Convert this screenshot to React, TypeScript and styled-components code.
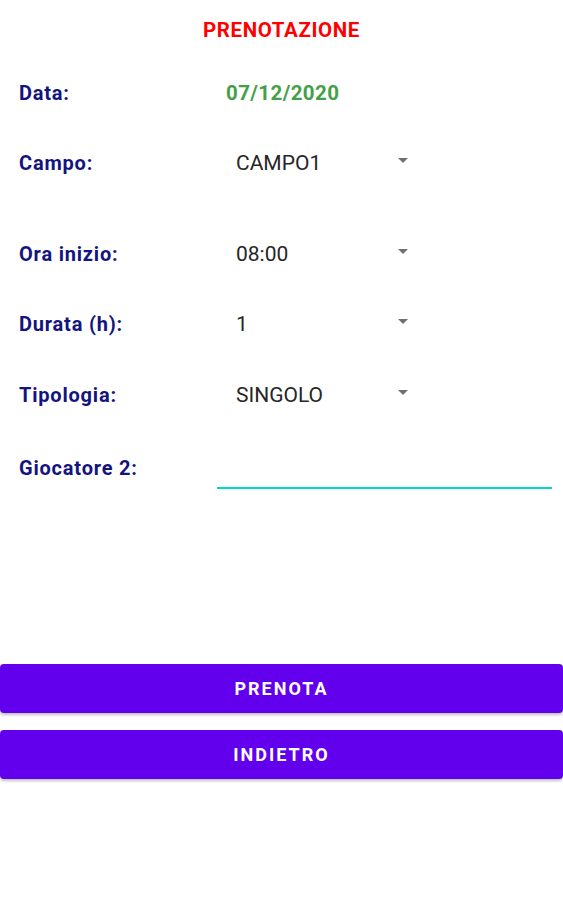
import React from 'react'
import styled, { createGlobalStyle } from 'styled-components'

const GlobalStyle = createGlobalStyle`
  html, body {
    margin: 0;
    padding: 0;
    background: #fff;
  }
  body {
    font-family: Roboto, 'Liberation Sans', sans-serif;
  }
`

const Screen = styled.div`
  width: 563px;
  height: 900px;
  display: flex;
  flex-direction: column;
  background: #fff;
`
const Header = styled.div`
  height: 60px;
  display: flex;
  align-items: center;
  justify-content: center;
  color: #ff0000;
  font-size: 20.5px;
  font-weight: 700;
  letter-spacing: 0.6px;
`
const Row = styled.div<{ $top: number }>`
  margin-top: ${(p) => p.$top}px;
  height: 40px;
  display: flex;
  align-items: center;
`
const Label = styled.div`
  width: 198px;
  padding-left: 19px;
  color: #14147f;
  font-size: 20px;
  font-weight: 700;
  letter-spacing: 0.8px;
`
const DateValue = styled.div`
  padding-left: 9px;
  color: #43a047;
  font-size: 20.5px;
  font-weight: 700;
  letter-spacing: 0.4px;
`
const Spinner = styled.div`
  width: 172px;
  padding: 0 10px 0 19px;
  display: flex;
  align-items: center;
  justify-content: space-between;
  color: #262626;
  font-size: 21px;
`
const Arrow = styled.span`
  width: 0;
  height: 0;
  margin-bottom: 5px;
  border-left: 5px solid transparent;
  border-right: 5px solid transparent;
  border-top: 5px solid #707070;
`
const Input = styled.div`
  width: 335px;
  height: 38px;
  margin-top: 1px;
  border-bottom: 2px solid #03dac5;
  align-self: flex-start;
`
const Buttons = styled.div`
  margin-top: 176px;
  display: flex;
  flex-direction: column;
  gap: 17px;
`
const Button = styled.button`
  width: 563px;
  height: 49px;
  margin: 0;
  border: none;
  border-radius: 4px;
  background: #6200ee;
  color: #fff;
  font-family: Roboto, 'Liberation Sans', sans-serif;
  font-size: 18px;
  font-weight: 700;
  letter-spacing: 2px;
  box-shadow: 0 2px 3px rgba(0, 0, 0, 0.25);
`

const spinners = [
  { label: 'Ora inizio:', value: '08:00', top: 51 },
  { label: 'Durata (h):', value: '1', top: 30 },
  { label: 'Tipologia:', value: 'SINGOLO', top: 31 },
]

function App() {
  return (
    <Screen>
      <GlobalStyle />
      <Header>PRENOTAZIONE</Header>
      <Row $top={13}>
        <Label>Data:</Label>
        <DateValue>07/12/2020</DateValue>
      </Row>
      <Row $top={30}>
        <Label>Campo:</Label>
        <Spinner>
          <span>CAMPO1</span>
          <Arrow />
        </Spinner>
      </Row>
      {spinners.map((s) => (
        <Row key={s.label} $top={s.top}>
          <Label>{s.label}</Label>
          <Spinner>
            <span>{s.value}</span>
            <Arrow />
          </Spinner>
        </Row>
      ))}
      <Row $top={33}>
        <Label>Giocatore 2:</Label>
        <Input />
      </Row>
      <Buttons>
        <Button>PRENOTA</Button>
        <Button>INDIETRO</Button>
      </Buttons>
    </Screen>
  )
}

export default App
